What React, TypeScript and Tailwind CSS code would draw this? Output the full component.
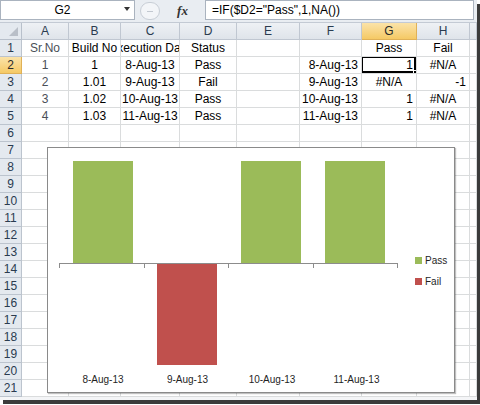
import React from 'react';

type Align = 'l' | 'c' | 'r';
interface Cell {
  v: string;
  a?: Align;
  dim?: boolean;
}

const COL_LETTERS = ['A', 'B', 'C', 'D', 'E', 'F', 'G', 'H', ''];

// rows 1..5 carry data, the rest are empty
const DATA: Cell[][] = [
  [
    { v: 'Sr.No', a: 'c', dim: true },
    { v: 'Build No', a: 'c' },
    { v: 'Execution Date', a: 'c' },
    { v: 'Status', a: 'c' },
    { v: '' },
    { v: '' },
    { v: 'Pass', a: 'c' },
    { v: 'Fail', a: 'c' },
  ],
  [
    { v: '1', a: 'c', dim: true },
    { v: '1', a: 'c' },
    { v: '8-Aug-13', a: 'c' },
    { v: 'Pass', a: 'c' },
    { v: '' },
    { v: '8-Aug-13', a: 'r' },
    { v: '1', a: 'r' },
    { v: '#N/A', a: 'c' },
  ],
  [
    { v: '2', a: 'c', dim: true },
    { v: '1.01', a: 'c' },
    { v: '9-Aug-13', a: 'c' },
    { v: 'Fail', a: 'c' },
    { v: '' },
    { v: '9-Aug-13', a: 'r' },
    { v: '#N/A', a: 'c' },
    { v: '-1', a: 'r' },
  ],
  [
    { v: '3', a: 'c', dim: true },
    { v: '1.02', a: 'c' },
    { v: '10-Aug-13', a: 'c' },
    { v: 'Pass', a: 'c' },
    { v: '' },
    { v: '10-Aug-13', a: 'r' },
    { v: '1', a: 'r' },
    { v: '#N/A', a: 'c' },
  ],
  [
    { v: '4', a: 'c', dim: true },
    { v: '1.03', a: 'c' },
    { v: '11-Aug-13', a: 'c' },
    { v: 'Pass', a: 'c' },
    { v: '' },
    { v: '11-Aug-13', a: 'r' },
    { v: '1', a: 'r' },
    { v: '#N/A', a: 'c' },
  ],
];

const ROWS = Array.from({ length: 21 }, (_, i) => i + 1);

const alignClass = (a?: Align) =>
  a === 'c' ? 'justify-center' : a === 'r' ? 'justify-end' : 'justify-start';

const FormulaBar = () => (
  <div className="flex items-center h-[23px] bg-[#e9edf2] border-b border-[#c3cad4] pr-[3px]">
    <div className="relative flex items-center w-[135px] h-[20px] bg-white border border-[#aab3bf] mt-[-2px]">
      <span className="flex-1 text-center pr-[10px] text-[12px] text-black">G2</span>
      <span className="absolute right-[4px] top-[6px] w-0 h-0 border-l-[3px] border-r-[3px] border-t-[4px] border-l-transparent border-r-transparent border-t-[#333]" />
    </div>
    <div className="ml-[5px] w-[20px] h-[18px] rounded-full border border-[#c8ced6] bg-[#f3f5f8] flex items-center justify-center">
      <span className="w-[6px] h-[1px] bg-[#c2c8d0]" />
    </div>
    <div className="w-[45px] flex justify-center">
      <span className="text-[13px] italic font-bold text-[#333]" style={{ fontFamily: '"Liberation Serif", serif' }}>
        fx
      </span>
    </div>
    <div className="flex-1 h-[20px] bg-white border border-[#aab3bf] flex items-center pl-[6px] text-[12px] text-black mt-[-2px]">
      =IF($D2="Pass",1,NA())
    </div>
  </div>
);

const HeaderRow = () => (
  <>
    <div className="relative h-[17px] bg-[#e4e9ef] border-r border-b border-[#b8c0cb]">
      <span className="absolute right-[3px] bottom-[3px] w-0 h-0 border-b-[9px] border-l-[9px] border-b-[#b9bfc8] border-l-transparent" />
    </div>
    {COL_LETTERS.map((c, i) => (
      <div
        key={i}
        className={
          'h-[17px] flex items-center justify-center text-[12px] border-r border-b ' +
          (c === 'G'
            ? 'bg-gradient-to-b from-[#fbe3a8] to-[#f5c964] border-[#e0b157] text-[#2b2b2b]'
            : 'bg-gradient-to-b from-[#eef1f5] to-[#dfe4ea] border-[#c0c7d1] text-[#2a3b4f]')
        }
      >
        {c}
      </div>
    ))}
  </>
);

const SheetRow = ({ r }: { r: number }) => {
  const cells = DATA[r - 1] ?? [];
  return (
    <>
      <div
        className={
          'h-[17px] flex items-center justify-center text-[12px] border-r border-b ' +
          (r === 2
            ? 'bg-gradient-to-b from-[#fbe3a8] to-[#f5c964] border-[#e0b157] text-[#2b2b2b]'
            : 'bg-[#e4e9ef] border-[#bcc4ce] text-[#2a3b4f]')
        }
      >
        {r}
      </div>
      {COL_LETTERS.map((_, ci) => {
        const cell = cells[ci];
        const selected = r === 2 && ci === 6;
        return (
          <div
            key={ci}
            className={
              'relative h-[17px] flex items-center overflow-hidden whitespace-nowrap px-[3px] text-[12px] border-r border-b border-[#dadcdd] ' +
              alignClass(cell?.a) +
              (cell?.dim ? ' text-[#4a4f57]' : ' text-black')
            }
          >
            {cell?.v}
            {selected && (
              <>
                <span className="absolute -left-px -top-px right-0 bottom-0 border-2 border-black" />
                <span className="absolute right-[-2px] bottom-[-2px] w-[5px] h-[5px] bg-black border border-white" />
              </>
            )}
          </div>
        );
      })}
    </>
  );
};

const Chart = () => {
  const axisY = 115;
  const bars = [
    { x: 25, pass: true },
    { x: 109, pass: false },
    { x: 193, pass: true },
    { x: 277, pass: true },
  ];
  const labels = ['8-Aug-13', '9-Aug-13', '10-Aug-13', '11-Aug-13'];
  const ticks = [11, 95.5, 180, 264.5, 349];
  return (
    <div className="absolute left-[47px] top-[147px] w-[408px] h-[246px] bg-white border border-[#8a8a8a] shadow-[1px_1px_1px_rgba(0,0,0,0.25)]">
      <svg width="406" height="244" className="absolute left-0 top-0">
        {bars.map((b, i) =>
          b.pass ? (
            <rect key={i} x={b.x} y={13} width={60} height={axisY - 13} fill="#9bbb59" />
          ) : (
            <rect key={i} x={b.x} y={axisY} width={60} height={102} fill="#c0504d" />
          )
        )}
        <line x1={11} y1={axisY + 0.5} x2={349} y2={axisY + 0.5} stroke="#8c8c8c" strokeWidth={1} />
        {ticks.map((t) => (
          <line key={t} x1={Math.round(t) + 0.5} y1={axisY} x2={Math.round(t) + 0.5} y2={axisY + 5} stroke="#8c8c8c" strokeWidth={1} />
        ))}
        {labels.map((l, i) => (
          <text
            key={l}
            x={55 + i * 84.5}
            y={235}
            textAnchor="middle"
            fontSize={10}
            fill="#1f1f1f"
            fontFamily='"Liberation Sans", Arial, sans-serif'
          >
            {l}
          </text>
        ))}
        <rect x={367} y={109} width={7} height={7} fill="#9bbb59" />
        <text x={377} y={116} fontSize={10} fill="#1f1f1f" fontFamily='"Liberation Sans", Arial, sans-serif'>
          Pass
        </text>
        <rect x={367} y={130} width={7} height={7} fill="#c0504d" />
        <text x={377} y={137} fontSize={10} fill="#1f1f1f" fontFamily='"Liberation Sans", Arial, sans-serif'>
          Fail
        </text>
      </svg>
    </div>
  );
};

export default function App() {
  return (
    <div className="w-[480px] h-[405px] bg-white" style={{ fontFamily: '"Liberation Sans", Arial, sans-serif' }}>
      <div className="relative w-[477px] h-[400px] overflow-hidden bg-[#f4f5f7] shadow-[3px_4px_0_#3b3b3b]">
        <FormulaBar />
        <div className="grid grid-cols-[22px_47px_52px_59px_57px_63px_62px_55px_53px_1fr] bg-white">
          <HeaderRow />
          {ROWS.map((r) => (
            <SheetRow key={r} r={r} />
          ))}
        </div>
        <Chart />
      </div>
    </div>
  );
}
